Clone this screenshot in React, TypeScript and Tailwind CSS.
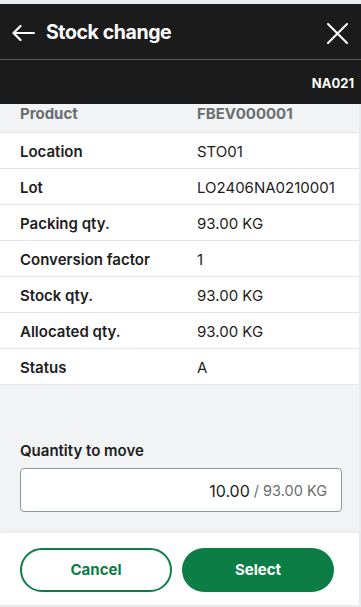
const rows: [string, string][] = [
  ["Location", "STO01"],
  ["Lot", "LO2406NA0210001"],
  ["Packing qty.", "93.00 KG"],
  ["Conversion factor", "1"],
  ["Stock qty.", "93.00 KG"],
  ["Allocated qty.", "93.00 KG"],
  ["Status", "A"],
];

export default function App() {
  return (
    <div
      className="flex h-[607px] w-full flex-col bg-[#e9ecef] pt-1 text-[#1d1d1d]"
      style={{ fontFamily: "Inter, 'Noto Sans', sans-serif" }}
    >
      <header className="flex h-[55px] items-center bg-[#1b1b1b] pl-[12px] pr-[13px] pt-[3px] text-white">
        <svg width="23" height="16" viewBox="0 0 23 16" fill="none" stroke="currentColor" strokeWidth="2.2" strokeLinecap="round" strokeLinejoin="round">
          <path d="M22 8H1.5M8.5 1 1.5 8l7 7" />
        </svg>
        <h1 className="ml-[11px] flex-1 text-[19.5px] font-bold tracking-[-0.4px]">Stock change</h1>
        <svg width="21" height="21" viewBox="0 0 21 21" fill="none" stroke="currentColor" strokeWidth="2" strokeLinecap="round">
          <path d="M1 1l19 19M20 1 1 20" />
        </svg>
      </header>
      <div className="h-px bg-[#5c5c5c]" />
      <div className="flex h-[44px] items-center justify-end bg-[#1b1b1b] pr-[7px] pt-[3px] text-[13px] font-bold text-white">
        NA021
      </div>

      <div className="mr-[2px] flex flex-1 flex-col bg-[#f1f3f4]">
        <div className="flex h-[29px] items-start border-b border-[#e3e6e8] pl-5 pr-5 text-[15px] font-bold leading-[20px] text-[#6a6d70]">
          <span className="w-[177px]">Product</span>
          <span>FBEV000001</span>
        </div>
        <div className="bg-white">
          {rows.map(([label, value]) => (
            <div key={label} className="flex h-[36px] items-center border-b border-[#e3e6e8] px-5 pt-[4px] text-[15px]">
              <span className="w-[177px] font-semibold">{label}</span>
              <span>{value}</span>
            </div>
          ))}
        </div>

        <div className="flex flex-1 flex-col justify-end pb-[21px] pl-5 pr-[17px]">
          <label className="mb-[6px] text-[15px] font-semibold">Quantity to move</label>
          <div className="flex h-[44px] items-center justify-end rounded-[4px] border border-[#8b98a3] bg-white pl-[13px] pr-[14px] pt-[2px]">
            <span className="text-[16px] text-[#1d1d1d]">10.00</span>
            <span className="ml-[4px] text-[14.5px] text-[#6a6d70]">/ 93.00 KG</span>
          </div>
        </div>

        <footer className="flex h-[72px] items-center gap-[10px] bg-white px-5 pt-[2px] shadow-[0_-2px_4px_rgba(0,0,0,0.04)]">
          <button className="h-[44px] w-[152px] rounded-full border-2 border-[#0b7d45] text-[15px] font-bold text-[#0b7d45]">
            Cancel
          </button>
          <button className="h-[44px] w-[152px] rounded-full bg-[#0b7d45] text-[15px] font-bold text-white">
            Select
          </button>
        </footer>
      </div>
      <div className="h-[2px]" />
    </div>
  );
}
